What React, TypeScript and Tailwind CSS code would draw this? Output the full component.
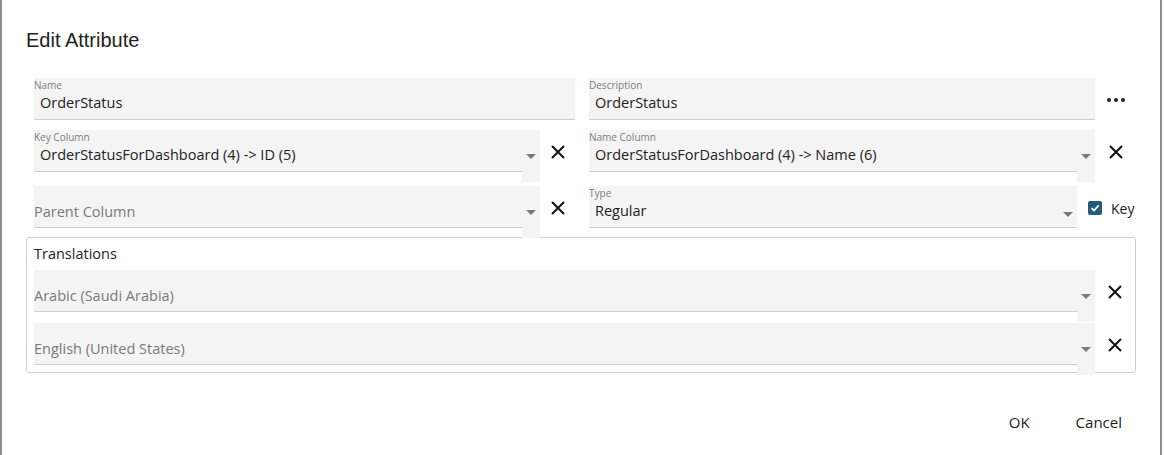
import React from "react";

const XIcon = () => (
  <svg width="16" height="16" viewBox="0 0 16 16" className="block">
    <path d="M2 2 L14 14 M14 2 L2 14" stroke="#111" strokeWidth="2" fill="none" />
  </svg>
);

const Arrow = () => (
  <svg width="10" height="5" viewBox="0 0 10 5" className="block">
    <path d="M0 0 L10 0 L5 5 Z" fill="#7a7a7a" />
  </svg>
);

const font = { fontFamily: '"Open Sans", "Noto Sans", sans-serif' };

function TextField({ label, value, className }: { label: string; value: string; className?: string }) {
  return (
    <div className={"h-[42px] bg-[#f4f4f4] border-b border-[#cfcfcf] flex flex-col " + (className ?? "")}>
      <div className="text-[10px] leading-[12px] text-[#7d7d7d] mt-[1px]">{label}</div>
      <div className="text-[14.5px] leading-[18px] text-[#222] mt-[3px] pl-[6px]">{value}</div>
    </div>
  );
}

function SelectField({
  label,
  value,
  placeholder,
  className,
}: {
  label?: string;
  value?: string;
  placeholder?: string;
  className?: string;
}) {
  return (
    <div className={"h-[42px] flex items-start " + (className ?? "")}>
      <div className="flex-1 h-[42px] bg-[#f4f4f4] border-b border-[#cfcfcf] flex flex-col">
        {label ? (
          <>
            <div className="text-[10px] leading-[12px] text-[#7d7d7d] mt-[1px]">{label}</div>
            <div className="text-[14.5px] leading-[18px] text-[#222] mt-[3px] pl-[6px] whitespace-nowrap">{value}</div>
          </>
        ) : (
          <div className="text-[14.5px] leading-[18px] text-[#7a7a7a] mt-[17px] whitespace-nowrap">{placeholder}</div>
        )}
      </div>
      <div className="w-[18px] h-[52px] bg-[#f4f4f4] flex justify-center pt-[24px]">
        <Arrow />
      </div>
    </div>
  );
}

export default function App() {
  return (
    <div className="w-[1164px] h-[455px] bg-white overflow-hidden" style={font}>
      <div className="w-[1162px] h-[455px] border-l-2 border-r-2 border-[#8e8e8e] bg-white flex flex-col">
        <div
          className="pl-[24px] pt-[28px] text-[20px] leading-[24px] text-[#222]"
          style={{ fontFamily: '"Liberation Sans", Arial, sans-serif' }}
        >
          Edit Attribute
        </div>

        <div className="pl-[24px] pr-[24px] mt-[26px] flex flex-col">
          {/* Row 1 */}
          <div className="flex pl-[8px] h-[42px]">
            <TextField label="Name" value="OrderStatus" className="w-[541px]" />
            <TextField label="Description" value="OrderStatus" className="w-[506px] ml-[14px]" />
            <div className="flex-1 flex items-center justify-center pt-[2px]">
              <svg width="18" height="4" viewBox="0 0 18 4" className="block">
                <circle cx="2" cy="2" r="2" fill="#222" />
                <circle cx="9" cy="2" r="2" fill="#222" />
                <circle cx="16" cy="2" r="2" fill="#222" />
              </svg>
            </div>
          </div>

          {/* Row 2 */}
          <div className="flex pl-[8px] h-[42px] mt-[10px]">
            <SelectField
              label="Key Column"
              value="OrderStatusForDashboard (4) -> ID (5)"
              className="w-[506px]"
            />
            <div className="w-[35px] flex items-center justify-center pt-[1px]">
              <XIcon />
            </div>
            <SelectField
              label="Name Column"
              value="OrderStatusForDashboard (4) -> Name (6)"
              className="w-[506px] ml-[14px]"
            />
            <div className="flex-1 flex items-center justify-center pt-[1px]">
              <XIcon />
            </div>
          </div>

          {/* Row 3 */}
          <div className="flex pl-[8px] h-[42px] mt-[14px] relative z-10">
            <SelectField placeholder="Parent Column" className="w-[506px]" />
            <div className="w-[35px] flex items-center justify-center pt-[1px]">
              <XIcon />
            </div>
            <div className="w-[488px] ml-[14px] h-[42px] bg-[#f4f4f4] border-b border-[#cfcfcf] flex">
              <div className="flex-1 flex flex-col">
                <div className="text-[10px] leading-[12px] text-[#7d7d7d] mt-[1px]">Type</div>
                <div className="text-[14.5px] leading-[18px] text-[#222] mt-[3px] pl-[6px]">Regular</div>
              </div>
              <div className="w-[18px] flex justify-center pt-[26px]">
                <Arrow />
              </div>
            </div>
            <div className="flex-1 flex items-center pl-[11px] gap-[9px] pt-[2px]">
              <div className="w-[14px] h-[14px] rounded-[2px] bg-[#245b78] flex items-center justify-center">
                <svg width="10" height="10" viewBox="0 0 10 10" className="block">
                  <path d="M1.5 5.2 L4 7.6 L8.6 2.4" stroke="#fff" strokeWidth="1.6" fill="none" />
                </svg>
              </div>
              <span className="text-[14px] text-[#222]">Key</span>
            </div>
          </div>

          {/* Translations */}
          <div className="mt-[9px] h-[136px] border border-[#cfcfcf] rounded-[3px] pl-[7px] flex flex-col">
            <div className="text-[14.5px] leading-[16px] text-[#222] mt-[8px]">Translations</div>
            <div className="flex h-[42px] mt-[8px]">
              <SelectField placeholder="Arabic (Saudi Arabia)" className="w-[1061px]" />
              <div className="flex-1 flex items-center justify-center pt-[2px]">
                <XIcon />
              </div>
            </div>
            <div className="flex h-[42px] mt-[11px] relative z-10">
              <SelectField placeholder="English (United States)" className="w-[1061px]" />
              <div className="flex-1 flex items-center justify-center pt-[2px]">
                <XIcon />
              </div>
            </div>
          </div>
        </div>

        <div className="flex justify-end pr-[38px] mt-[38px] gap-[46px] text-[15px] text-[#222]">
          <span>OK</span>
          <span>Cancel</span>
        </div>
      </div>
    </div>
  );
}
